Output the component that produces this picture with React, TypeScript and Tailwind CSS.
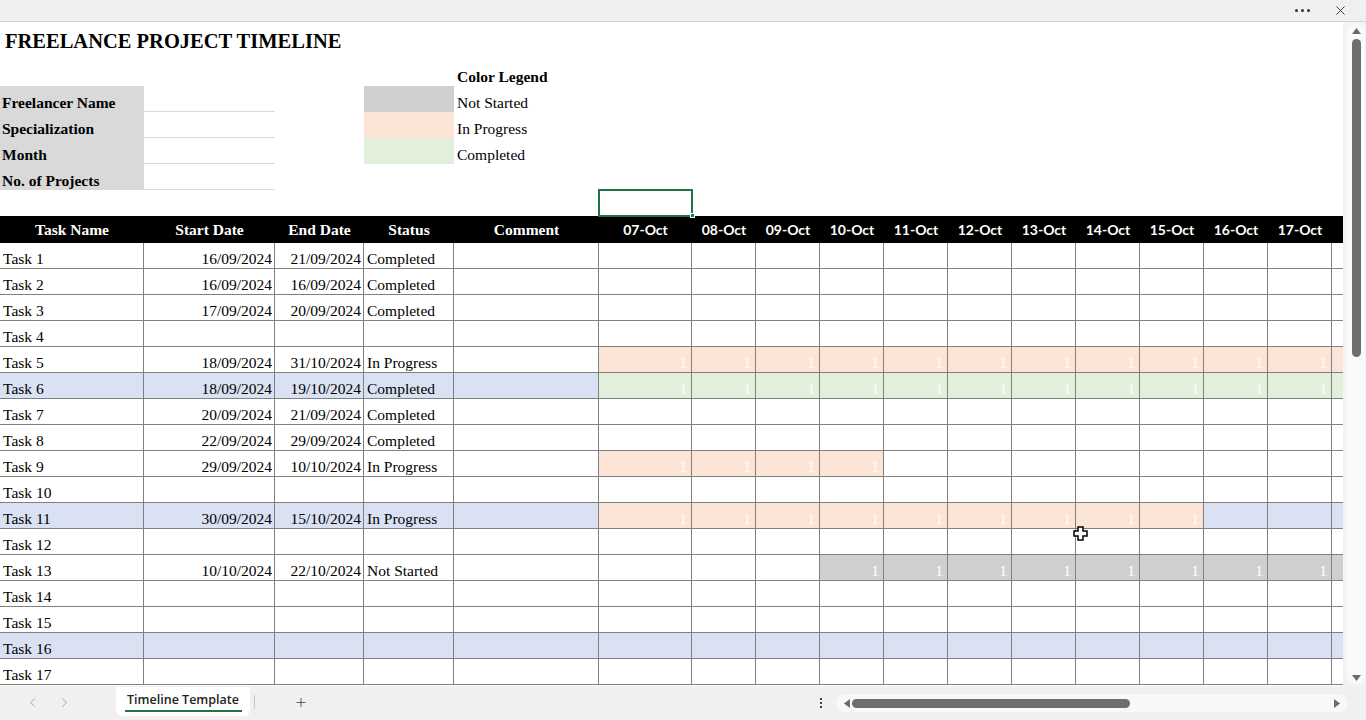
import { ChevronLeft, ChevronRight, Plus, X } from "lucide-react";

type Task = {
  name: string;
  start?: string;
  end?: string;
  status?: "Completed" | "In Progress" | "Not Started";
  band?: boolean;
};

const tasks: Task[] = [
  { name: "Task 1", start: "16/09/2024", end: "21/09/2024", status: "Completed" },
  { name: "Task 2", start: "16/09/2024", end: "16/09/2024", status: "Completed" },
  { name: "Task 3", start: "17/09/2024", end: "20/09/2024", status: "Completed" },
  { name: "Task 4" },
  { name: "Task 5", start: "18/09/2024", end: "31/10/2024", status: "In Progress" },
  { name: "Task 6", start: "18/09/2024", end: "19/10/2024", status: "Completed", band: true },
  { name: "Task 7", start: "20/09/2024", end: "21/09/2024", status: "Completed" },
  { name: "Task 8", start: "22/09/2024", end: "29/09/2024", status: "Completed" },
  { name: "Task 9", start: "29/09/2024", end: "10/10/2024", status: "In Progress" },
  { name: "Task 10" },
  { name: "Task 11", start: "30/09/2024", end: "15/10/2024", status: "In Progress", band: true },
  { name: "Task 12" },
  { name: "Task 13", start: "10/10/2024", end: "22/10/2024", status: "Not Started" },
  { name: "Task 14" },
  { name: "Task 15" },
  { name: "Task 16", band: true },
  { name: "Task 17" },
];

// 07-Oct .. 18-Oct (the last one is cut off by the window)
const days = [7, 8, 9, 10, 11, 12, 13, 14, 15, 16, 17, 18];

const statusBg: Record<string, string> = {
  Completed: "bg-[#e2efda]",
  "In Progress": "bg-[#fce4d6]",
  "Not Started": "bg-[#d0cece]",
};

const cols =
  "grid grid-cols-[144px_131px_89px_90px_145px_93px_repeat(10,64px)_11px]";

const cell =
  "h-[26px] flex items-end pb-[1px] leading-[17px] whitespace-nowrap overflow-hidden";

function toNum(d?: string) {
  if (!d) return 0;
  const [dd, mm] = d.split("/");
  return Number(mm) * 100 + Number(dd);
}

const info = [
  { label: "Freelancer Name", swatch: "bg-[#d0cece]", legend: "Not Started" },
  { label: "Specialization", swatch: "bg-[#fce4d6]", legend: "In Progress" },
  { label: "Month", swatch: "bg-[#e2efda]", legend: "Completed" },
  { label: "No. of Projects", swatch: "", legend: "" },
];

function TaskRow({ task }: { task: Task }) {
  const base = task.band ? "bg-[#d9e1f2]" : "bg-white";
  const line = "border-b border-r border-[#7f7f7f]";
  const s = toNum(task.start);
  const e = toNum(task.end);
  return (
    <div className={cols}>
      <div className={`${cell} ${line} ${base} pl-[3px]`}>{task.name}</div>
      <div className={`${cell} ${line} ${base} justify-end pr-[2px]`}>{task.start}</div>
      <div className={`${cell} ${line} ${base} justify-end pr-[2px]`}>{task.end}</div>
      <div className={`${cell} ${line} ${base} pl-[3px]`}>{task.status}</div>
      <div className={`${cell} ${line} ${base}`} />
      {days.map((d, i) => {
        const on = task.status && s <= 1000 + d && e >= 1000 + d;
        const bg = on ? statusBg[task.status as string] : base;
        const last = i === days.length - 1;
        return (
          <div
            key={d}
            className={`${cell} ${bg} border-b border-[#7f7f7f] ${last ? "" : "border-r"} justify-end pr-[4px] text-white`}
          >
            {on && !last ? "1" : ""}
          </div>
        );
      })}
    </div>
  );
}

export default function App() {
  return (
    <div className="relative flex h-[720px] w-[1366px] flex-col overflow-hidden bg-white text-[15.5px] text-black font-['Liberation_Serif',serif]">
      {/* window chrome */}
      <div className="flex h-[22px] shrink-0 items-center justify-end border-b border-[#d2d2d2] bg-[#f0f0f0] pr-[18px]">
        <div className="mr-[23px] flex gap-[3px]">
          <span className="h-[3px] w-[3px] rounded-full bg-[#333]" />
          <span className="h-[3px] w-[3px] rounded-full bg-[#333]" />
          <span className="h-[3px] w-[3px] rounded-full bg-[#333]" />
        </div>
        <X size={15} strokeWidth={1.4} className="text-[#222]" />
      </div>

      <div className="flex h-[664px] shrink-0">
        {/* sheet */}
        <div className="w-[1343px] overflow-hidden">
          <div className="h-[38px] pl-[5px] pt-[7px] text-[20.5px] font-bold leading-[24px]">
            FREELANCE PROJECT TIMELINE
          </div>

          <div className={cols}>
            <div className={cell} />
            <div className={cell} />
            <div className={cell} />
            <div className={cell} />
            <div className={`${cell} pl-[3px] font-bold`}>Color Legend</div>
          </div>

          {info.map((r) => (
            <div key={r.label} className={cols}>
              <div className={`${cell} bg-[#d9d9d9] pl-[2px] font-bold`}>{r.label}</div>
              <div className={`${cell} border-b border-[#d9d9d9]`} />
              <div className={cell} />
              <div className={`${cell} ${r.swatch}`} />
              <div className={`${cell} pl-[3px]`}>{r.legend}</div>
            </div>
          ))}

          <div className={cols}>
            <div className={cell} />
            <div className={cell} />
            <div className={cell} />
            <div className={cell} />
            <div className={cell} />
            <div className={`${cell} relative overflow-visible`}>
              <div className="absolute -left-[1px] -top-[1px] h-[28px] w-[95px] border-2 border-[#217346]" />
              <div className="absolute -right-[3px] bottom-[-2px] h-[5px] w-[5px] border border-white bg-[#217346]" />
            </div>
          </div>

          <div className={`${cols} h-[27px] bg-black font-bold text-white`}>
            {["Task Name", "Start Date", "End Date", "Status", "Comment"].map((h) => (
              <div key={h} className="flex items-center justify-center leading-[17px]">
                {h}
              </div>
            ))}
            {days.map((d, i) => (
              <div
                key={d}
                className="flex items-center justify-center text-[14px] font-bold font-['Lato',sans-serif]"
              >
                {i < days.length - 1 ? `${String(d).padStart(2, "0")}-Oct` : ""}
              </div>
            ))}
          </div>

          {tasks.map((t) => (
            <TaskRow key={t.name} task={t} />
          ))}
        </div>

        {/* vertical scrollbar */}
        <div className="flex w-[23px] bg-[#f3f3f3] py-[2px] pl-[4px] pr-[1px]">
          <div className="flex w-full flex-col items-center rounded-full bg-[#fafafa]">
            <svg width="9" height="6" viewBox="0 0 9 6" className="mt-[4px]">
              <path d="M4.5 0L9 6H0z" fill="#6b6b6b" />
            </svg>
            <div className="mt-[5px] h-[318px] w-[9px] rounded-full bg-[#6e6e6e]" />
            <div className="flex-1" />
            <svg width="9" height="6" viewBox="0 0 9 6" className="mb-[3px]">
              <path d="M0 0H9L4.5 6z" fill="#6b6b6b" />
            </svg>
          </div>
        </div>
      </div>

      {/* sheet tabs / horizontal scroll */}
      <div className="flex h-[34px] shrink-0 items-start bg-[#f0f0f0] font-['Open_Sans',sans-serif]">
        <div className="ml-[24px] mt-[8px] flex h-[16px] w-[16px] items-center justify-center text-[#a3a3a3]">
          <ChevronLeft size={15} strokeWidth={1.5} />
        </div>
        <div className="ml-[16px] mt-[8px] flex h-[16px] w-[16px] items-center justify-center text-[#a3a3a3]">
          <ChevronRight size={15} strokeWidth={1.5} />
        </div>
        <div className="ml-[44px] mt-px flex h-[29px] w-[134px] flex-col items-center rounded-b-[6px] bg-white pt-[4px]">
          <span className="text-[12.5px] font-semibold leading-[17px] text-[#222]">Timeline Template</span>
          <span className="mt-[2px] h-[2px] w-[117px] bg-[#217346]" />
        </div>
        <div className="ml-[4px] mt-[9px] h-[14px] w-px bg-[#c8c8c8]" />
        <div className="ml-[39px] mt-[9px] flex h-[14px] w-[14px] items-center justify-center text-[#333]">
          <Plus size={15} strokeWidth={1.3} />
        </div>
        <div className="ml-[512px] mt-[12px] flex flex-col gap-[2px]">
          <span className="h-[2px] w-[2px] bg-[#444]" />
          <span className="h-[2px] w-[2px] bg-[#444]" />
          <span className="h-[2px] w-[2px] bg-[#444]" />
        </div>
        <div className="ml-[14px] mt-[8px] flex h-[18px] w-[512px] items-center rounded-full bg-[#f8f8f8] pl-[8px] pr-[8px]">
          <svg width="6" height="9" viewBox="0 0 6 9">
            <path d="M0 4.5L6 0V9z" fill="#6b6b6b" />
          </svg>
          <div className="ml-[2px] h-[9px] w-[278px] rounded-full bg-[#6e6e6e]" />
          <div className="flex-1" />
          <svg width="6" height="9" viewBox="0 0 6 9">
            <path d="M6 4.5L0 0V9z" fill="#6b6b6b" />
          </svg>
        </div>
      </div>

      {/* mouse cursor */}
      <svg
        width="15"
        height="15"
        viewBox="0 0 15 15"
        className="pointer-events-none absolute left-[1073px] top-[526px]"
      >
        <path
          d="M5 1H10V5H14V10H10V14H5V10H1V5H5Z"
          fill="white"
          stroke="black"
          strokeWidth="1.5"
        />
      </svg>
    </div>
  );
}
